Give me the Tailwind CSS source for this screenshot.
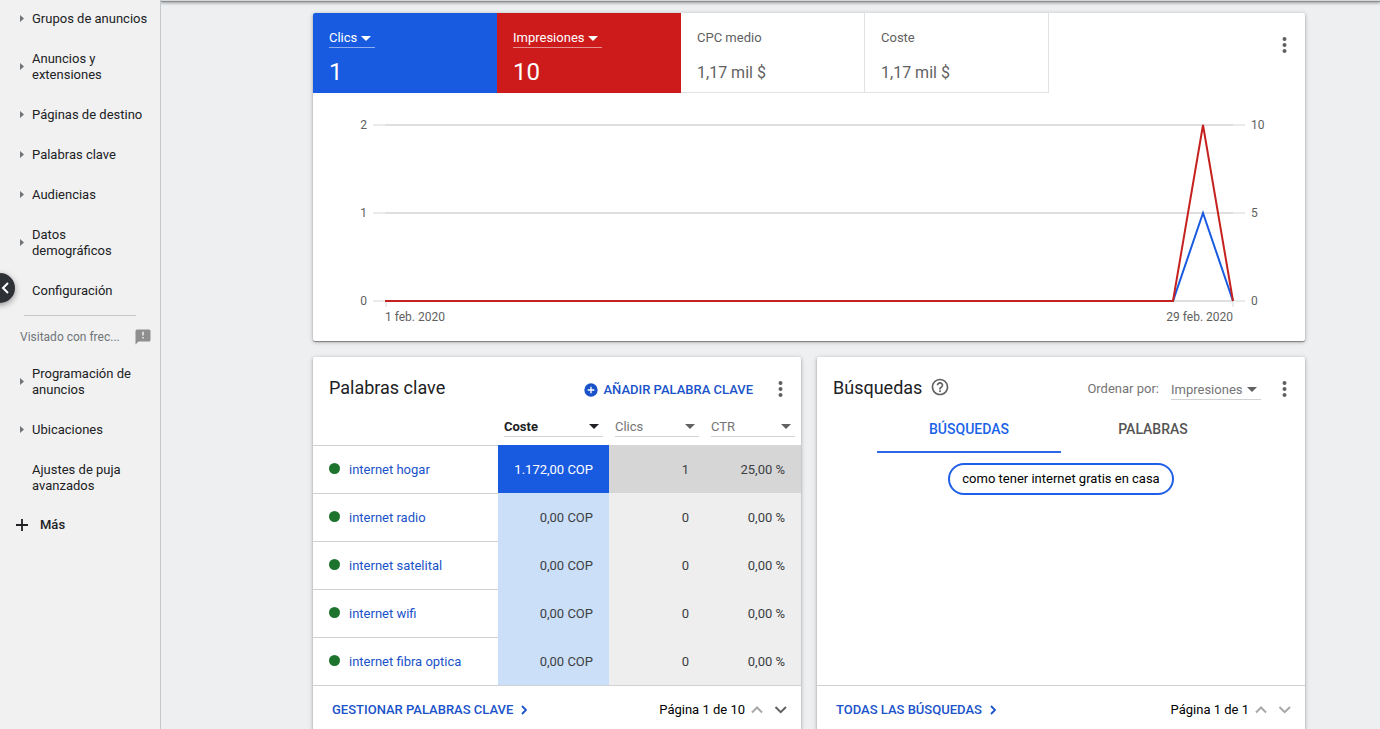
<!DOCTYPE html>
<html lang="es">
<head>
<meta charset="utf-8">
<meta name="viewport" content="width=device-width, initial-scale=1">
<title>Palabras clave</title>
<script src="https://cdn.jsdelivr.net/npm/@tailwindcss/browser@4"></script>
</head>
<body class="flex h-screen overflow-hidden bg-[#edeff1] font-['Roboto',sans-serif] text-[13px] leading-4 text-[#202124]">

<svg class="hidden">
  <symbol id="kebab" viewBox="0 0 24 24"><circle cx="11.5" cy="6" r="2"/><circle cx="11.5" cy="12" r="2"/><circle cx="11.5" cy="18" r="2"/></symbol>
  <symbol id="caret" viewBox="0 0 10 5"><path d="M0 0h10L5 5z"/></symbol>
  <symbol id="side" viewBox="0 0 4 8"><path d="M0 0l4 3.5L0 7z"/></symbol>
  <symbol id="right" viewBox="0 0 6 10"><path d="M1 1l4 4-4 4" fill="none" stroke="currentColor" stroke-width="1.8"/></symbol>
  <symbol id="up" viewBox="0 0 12 8"><path d="M1 6.5l5-5 5 5" fill="none" stroke="currentColor" stroke-width="2"/></symbol>
  <symbol id="down" viewBox="0 0 12 8"><path d="M.5 1l5.2 5.2L11 1" fill="none" stroke="currentColor" stroke-width="2"/></symbol>
</svg>

<aside class="relative w-[161px] shrink-0 border-r border-[#c6c9cc] bg-[#f1f1f1]">
  <nav>
    <ul class="-mt-px">
      <li><a href="#" class="flex items-center py-3 pl-5"><svg class="h-2 w-1 shrink-0 fill-[#70757a]"><use href="#side"/></svg><span class="ml-2">Grupos de anuncios</span></a></li>
      <li><a href="#" class="flex items-center py-3 pl-5"><svg class="h-2 w-1 shrink-0 fill-[#70757a]"><use href="#side"/></svg><span class="ml-2">Anuncios y<br>extensiones</span></a></li>
      <li><a href="#" class="flex items-center py-3 pl-5"><svg class="h-2 w-1 shrink-0 fill-[#70757a]"><use href="#side"/></svg><span class="ml-2">Páginas de destino</span></a></li>
      <li><a href="#" class="flex items-center py-3 pl-5"><svg class="h-2 w-1 shrink-0 fill-[#70757a]"><use href="#side"/></svg><span class="ml-2">Palabras clave</span></a></li>
      <li><a href="#" class="flex items-center py-3 pl-5"><svg class="h-2 w-1 shrink-0 fill-[#70757a]"><use href="#side"/></svg><span class="ml-2">Audiencias</span></a></li>
      <li><a href="#" class="flex items-center py-3 pl-5"><svg class="h-2 w-1 shrink-0 fill-[#70757a]"><use href="#side"/></svg><span class="ml-2">Datos<br>demográficos</span></a></li>
      <li><a href="#" class="block py-3 pl-8">Configuración</a></li>
    </ul>
    <hr class="mx-6 mt-1 border-[#c6c9cc]">
    <div class="flex h-[38px] items-center justify-between pt-1 pr-2 pl-5 text-[12px] text-[#70757a]">
      <h2>Visitado con frec...</h2>
      <svg class="size-[18px]" viewBox="0 0 24 24" fill="#8f8f8f"><path d="M20 2H4a2 2 0 0 0-2 2v18l4-4h14a2 2 0 0 0 2-2V4a2 2 0 0 0-2-2zm-7 12h-2v-2h2v2zm0-4h-2V5h2v5z"/></svg>
    </div>
    <ul>
      <li><a href="#" class="flex items-center py-3 pl-5"><svg class="h-2 w-1 shrink-0 fill-[#70757a]"><use href="#side"/></svg><span class="ml-2">Programación de<br>anuncios</span></a></li>
      <li><a href="#" class="flex items-center py-3 pl-5"><svg class="h-2 w-1 shrink-0 fill-[#70757a]"><use href="#side"/></svg><span class="ml-2">Ubicaciones</span></a></li>
      <li><a href="#" class="block py-3 pl-8">Ajustes de puja<br>avanzados</a></li>
    </ul>
    <button type="button" class="flex h-[38px] items-center gap-3 pl-4 font-medium"><svg class="size-3" viewBox="0 0 12 12" stroke="#202124" stroke-width="1.8"><path d="M6 0v12M0 6h12"/></svg>Más</button>
  </nav>
  <button type="button" aria-label="Contraer menú" class="absolute top-[273px] left-[-15px] flex size-[30px] items-center justify-end rounded-full bg-[#2d3136] pr-[6px] text-white shadow-[0_2px_6px_rgba(0,0,0,0.4)]">
    <svg class="h-3 w-2" viewBox="0 0 8 12"><path d="M7 1L2 6l5 5" fill="none" stroke="currentColor" stroke-width="2"/></svg>
  </button>
</aside>

<div class="flex min-w-0 flex-1 flex-col">
  <header class="h-0.5 shrink-0 border-b border-[#8e9193] bg-[#d5d8da] shadow-[0_1px_3px_rgba(0,0,0,0.45)]"></header>

  <main class="flex flex-col gap-4 pt-[11px] pr-[75px] pl-[152px]">
    <section class="rounded-xs bg-white shadow-[0_1px_1px_rgba(0,0,0,0.35),0_1px_4px_rgba(0,0,0,0.3)]">
      <div class="flex justify-between">
        <div class="flex h-20 flex-1">
          <div class="w-46 rounded-tl-xs bg-[#185be0] px-4 pt-4 text-white">
            <label class="inline-flex h-[19px] items-center border-b border-white/50 pr-1"><select aria-label="Métrica 1" class="appearance-none outline-none"><option>Clics</option></select><svg class="ml-[3px] h-[5px] w-[10px] fill-white"><use href="#caret"/></svg></label>
            <p class="mt-2.5 text-[24px] leading-7">1</p>
          </div>
          <div class="w-46 bg-[#cd1b1c] px-4 pt-4 text-white">
            <label class="inline-flex h-[19px] items-center border-b border-white/50 pr-1"><select aria-label="Métrica 2" class="appearance-none outline-none"><option>Impresiones</option></select><svg class="ml-[3px] h-[5px] w-[10px] fill-white"><use href="#caret"/></svg></label>
            <p class="mt-2.5 text-[24px] leading-7">10</p>
          </div>
          <div class="w-46 border-r border-b border-[#e0e2e4] px-4 pt-4 text-[#616161]">
            <p class="pt-px">CPC medio</p>
            <p class="mt-[17px] text-[16px] leading-5">1,17 mil $</p>
          </div>
          <div class="w-46 border-r border-b border-[#e0e2e4] px-4 pt-4 text-[#616161]">
            <p class="pt-px">Coste</p>
            <p class="mt-[17px] text-[16px] leading-5">1,17 mil $</p>
          </div>
        </div>
        <button type="button" aria-label="Más opciones" class="mt-5 mr-2 size-6"><svg class="size-6 fill-[#616161]"><use href="#kebab"/></svg></button>
      </div>
      <svg class="block w-full fill-[#616161] text-[12px]" viewBox="0 0 992 248" role="img" aria-label="Clics e impresiones, febrero de 2020">
        <g fill="none" stroke-width="2">
          <path stroke="#ebebeb" d="M60 32h872M60 120h872M60 208h872"/>
          <path stroke="#ebebeb" d="M73 208v6M920 208v6"/>
          <path stroke="#dfdfdf" d="M72 32h848M72 120h848M72 208h848"/>
          <path stroke="#185be0" d="M72 208H860L890 120L920 208"/>
          <path stroke="#c5221f" d="M72 208H860L890 32L920 208"/>
        </g>
        <g text-anchor="end"><text x="54" y="36">2</text><text x="54" y="124">1</text><text x="54" y="212">0</text><text x="920" y="228">29 feb. 2020</text></g>
        <text x="938" y="36">10</text><text x="938" y="124">5</text><text x="938" y="212">0</text>
        <text x="72" y="228">1 feb. 2020</text>
      </svg>
    </section>

    <div class="grid grid-cols-2 gap-4">
      <section class="flex flex-col rounded-xs bg-white shadow-[0_1px_1px_rgba(0,0,0,0.35),0_1px_4px_rgba(0,0,0,0.3)]">
        <div class="flex h-14 items-center pt-2 pr-2 pl-4">
          <h2 class="flex-1 pb-0.5 text-[18px] leading-6">Palabras clave</h2>
          <button type="button" class="mr-4 flex items-center gap-1 pt-0.5 font-medium text-[#1a53c9]"><svg class="size-4" viewBox="0 0 24 24" fill="currentColor"><path d="M12 2a10 10 0 1 0 0 20 10 10 0 0 0 0-20zm5 11h-4v4h-2v-4H7v-2h4V7h2v4h4v2z"/></svg>AÑADIR PALABRA CLAVE</button>
          <button type="button" aria-label="Más opciones" class="size-6"><svg class="size-6 fill-[#616161]"><use href="#kebab"/></svg></button>
        </div>
        <table class="w-full table-fixed border-separate border-spacing-0 text-right text-[#3c4043]">
          <thead class="text-left">
            <tr class="h-8">
              <td class="w-[185px]"></td>
              <th class="w-[111px] px-1.5 pb-2 align-bottom"><label class="flex h-5 items-center border-b border-[#d0d2d4] pr-1"><select aria-label="Columna 1" class="flex-1 appearance-none font-bold text-[#202124] outline-none"><option>Coste</option></select><svg class="h-[5px] w-[10px] fill-[#202124]"><use href="#caret"/></svg></label></th>
              <th class="px-1.5 pb-2 align-bottom font-normal text-[#757575]"><label class="flex h-5 items-center border-b border-[#d0d2d4] pr-1"><select aria-label="Columna 2" class="min-w-0 flex-1 appearance-none outline-none"><option>Clics</option></select><svg class="h-[5px] w-[10px] fill-[#616161]"><use href="#caret"/></svg></label></th>
              <th class="px-1.5 pb-2 align-bottom font-normal text-[#757575]"><label class="flex h-5 items-center border-b border-[#d0d2d4] pr-1"><select aria-label="Columna 3" class="min-w-0 flex-1 appearance-none outline-none"><option>CTR</option></select><svg class="h-[5px] w-[10px] fill-[#616161]"><use href="#caret"/></svg></label></th>
            </tr>
          </thead>
          <tbody>
            <tr class="h-12"><td class="border-t border-[#cfd1d3] pl-4 text-left"><span class="mr-[9px] inline-block size-[11px] rounded-full bg-[#1e742c]"></span><a href="#" class="text-[#1a53c9]">internet hogar</a></td><td class="bg-[#185be0] pt-0.5 pr-4 text-white">1.172,00 COP</td><td class="bg-[#d6d6d6] pt-0.5 pr-4">1</td><td class="bg-[#d6d6d6] pt-0.5 pr-4">25,00 %</td></tr>
            <tr class="h-12"><td class="border-t border-[#cfd1d3] pl-4 text-left"><span class="mr-[9px] inline-block size-[11px] rounded-full bg-[#1e742c]"></span><a href="#" class="text-[#1a53c9]">internet radio</a></td><td class="bg-[#cbdff8] pt-0.5 pr-4">0,00 COP</td><td class="bg-[#eeeeee] pt-0.5 pr-4">0</td><td class="bg-[#eeeeee] pt-0.5 pr-4">0,00 %</td></tr>
            <tr class="h-12"><td class="border-t border-[#cfd1d3] pl-4 text-left"><span class="mr-[9px] inline-block size-[11px] rounded-full bg-[#1e742c]"></span><a href="#" class="text-[#1a53c9]">internet satelital</a></td><td class="bg-[#cbdff8] pt-0.5 pr-4">0,00 COP</td><td class="bg-[#eeeeee] pt-0.5 pr-4">0</td><td class="bg-[#eeeeee] pt-0.5 pr-4">0,00 %</td></tr>
            <tr class="h-12"><td class="border-t border-[#cfd1d3] pl-4 text-left"><span class="mr-[9px] inline-block size-[11px] rounded-full bg-[#1e742c]"></span><a href="#" class="text-[#1a53c9]">internet wifi</a></td><td class="bg-[#cbdff8] pt-0.5 pr-4">0,00 COP</td><td class="bg-[#eeeeee] pt-0.5 pr-4">0</td><td class="bg-[#eeeeee] pt-0.5 pr-4">0,00 %</td></tr>
            <tr class="h-12"><td class="border-t border-[#cfd1d3] pl-4 text-left"><span class="mr-[9px] inline-block size-[11px] rounded-full bg-[#1e742c]"></span><a href="#" class="text-[#1a53c9]">internet fibra optica</a></td><td class="bg-[#cbdff8] pt-0.5 pr-4">0,00 COP</td><td class="bg-[#eeeeee] pt-0.5 pr-4">0</td><td class="bg-[#eeeeee] pt-0.5 pr-4">0,00 %</td></tr>
          </tbody>
        </table>
        <footer class="flex h-12 items-center border-t border-[#cfd1d3] pr-[14px] pl-[19px]">
          <a href="#" class="flex flex-1 items-center gap-2 font-medium text-[#1a53c9]">GESTIONAR PALABRAS CLAVE<svg class="h-[10px] w-[6px]"><use href="#right"/></svg></a>
          <span class="text-black">Página 1 de 10</span>
          <button type="button" aria-label="Página anterior" disabled class="ml-[6px] text-[#a8a8a8]"><svg class="h-2 w-3"><use href="#up"/></svg></button>
          <button type="button" aria-label="Página siguiente" class="ml-3 text-[#616161]"><svg class="h-2 w-3"><use href="#down"/></svg></button>
        </footer>
      </section>

      <section class="flex flex-col rounded-xs bg-white shadow-[0_1px_1px_rgba(0,0,0,0.35),0_1px_4px_rgba(0,0,0,0.3)]">
        <div class="flex h-14 items-center pt-2 pr-2 pl-4 text-[#757575]">
          <h2 class="pb-0.5 text-[18px] leading-6 text-[#202124]">Búsquedas</h2>
          <button type="button" aria-label="Ayuda" class="ml-2 pb-1"><svg class="size-5" viewBox="0 0 24 24" fill="#616161"><path d="M11 18h2v-2h-2v2zm1-16C6.48 2 2 6.48 2 12s4.48 10 10 10 10-4.48 10-10S17.52 2 12 2zm0 18c-4.41 0-8-3.59-8-8s3.59-8 8-8 8 3.59 8 8-3.59 8-8 8zm0-14c-2.21 0-4 1.79-4 4h2c0-1.1.9-2 2-2s2 .9 2 2c0 2-3 1.75-3 5h2c0-2.25 3-2.5 3-5 0-2.21-1.79-4-4-4z"/></svg></button>
          <label for="orden" class="ml-auto">Ordenar por:</label>
          <span class="mt-[2px] ml-3 flex h-5 items-center border-b border-[#d0d2d4] pr-1"><select id="orden" class="appearance-none outline-none"><option>Impresiones</option></select><svg class="ml-1 h-[5px] w-[10px] fill-[#616161]"><use href="#caret"/></svg></span>
          <button type="button" aria-label="Más opciones" class="ml-3 size-6"><svg class="size-6 fill-[#616161]"><use href="#kebab"/></svg></button>
        </div>
        <div role="tablist" class="flex h-10 justify-center text-[14px] font-medium">
          <button type="button" role="tab" aria-selected="true" class="w-46 border-b-2 border-[#2c68e8] pb-[6px] text-[#1a63e8]">BÚSQUEDAS</button>
          <button type="button" role="tab" aria-selected="false" class="w-46 border-b-2 border-transparent pb-[6px] text-[#545454]">PALABRAS</button>
        </div>
        <div class="flex flex-1 items-start justify-center pt-[10px]">
          <button type="button" class="h-8 rounded-full border-2 border-[#1f5fe8] px-3 text-black">como tener internet gratis en casa</button>
        </div>
        <footer class="flex h-12 items-center border-t border-[#cfd1d3] pr-[14px] pl-[19px]">
          <a href="#" class="flex flex-1 items-center gap-2 font-medium text-[#1a53c9]">TODAS LAS BÚSQUEDAS<svg class="h-[10px] w-[6px]"><use href="#right"/></svg></a>
          <span class="text-black">Página 1 de 1</span>
          <button type="button" aria-label="Página anterior" disabled class="ml-[6px] text-[#a8a8a8]"><svg class="h-2 w-3"><use href="#up"/></svg></button>
          <button type="button" aria-label="Página siguiente" disabled class="ml-3 text-[#a8a8a8]"><svg class="h-2 w-3"><use href="#down"/></svg></button>
        </footer>
      </section>
    </div>
  </main>
</div>
</body>
</html>
